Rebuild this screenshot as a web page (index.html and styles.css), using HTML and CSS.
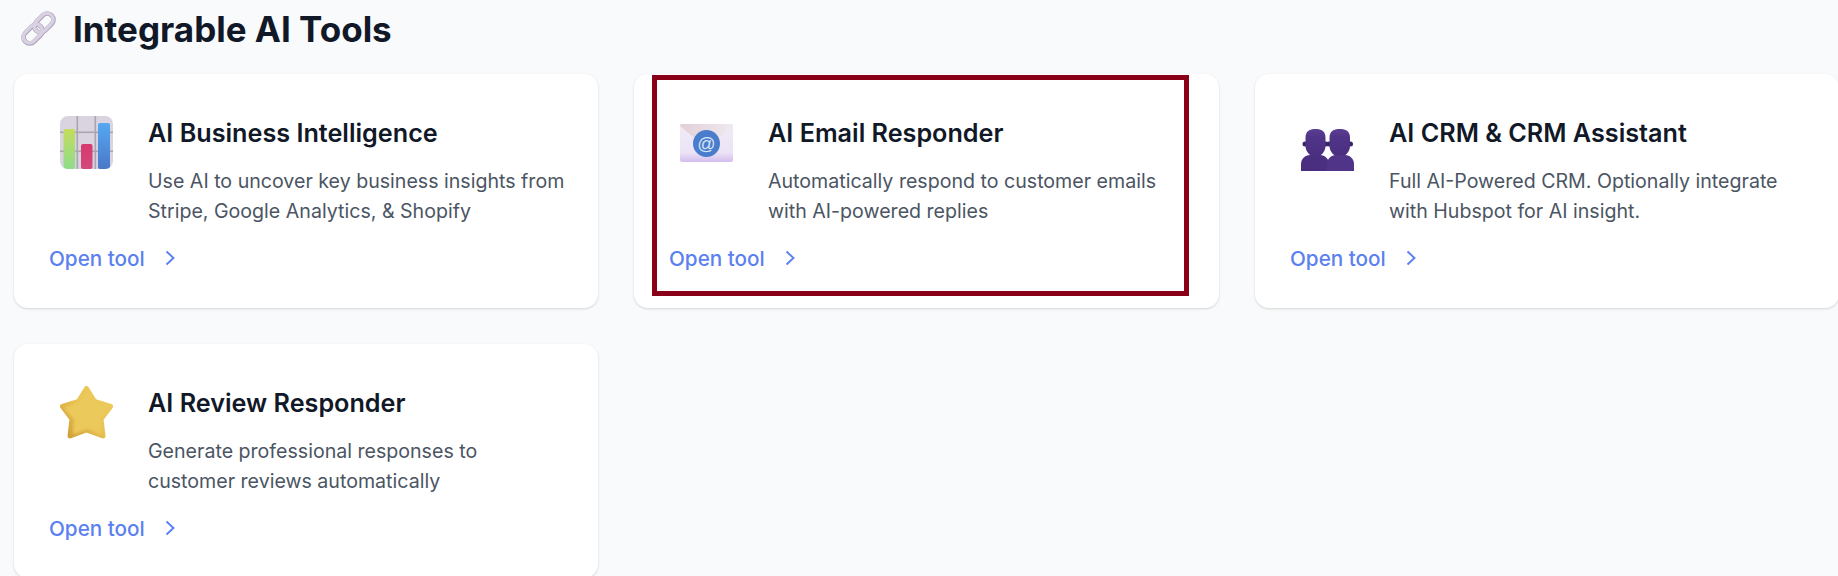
FILE: index.html
```html
<!DOCTYPE html>
<html lang="en">
<head>
  <meta charset="UTF-8" />
  <title>Integrable AI Tools</title>
  <link rel="stylesheet" href="styles.css">
</head>
<body>

  <!-- Page heading -->
  <header class="section-head">
    <svg class="head-icon" viewBox="0 0 36 36" aria-hidden="true">
      <g fill="none" transform="rotate(-45 18 18)">
        <rect x="0" y="12" width="21" height="12" rx="6" stroke="#a99db8" stroke-width="4.600"/>
        <rect x="15" y="12" width="21" height="12" rx="6" stroke="#a99db8" stroke-width="4.600"/>
        <rect x="0" y="11.600" width="21" height="12" rx="6" stroke="#d8d1e1" stroke-width="3.400"/>
        <rect x="15" y="11.600" width="21" height="12" rx="6" stroke="#d8d1e1" stroke-width="3.400"/>
      </g>
    </svg>
    <h1>Integrable AI Tools</h1>
  </header>

  <main class="tool-grid">

    <article class="tool-card">
      <div class="tool-top">
        <svg class="tool-icon" viewBox="0 0 53 53" aria-hidden="true">
          <defs>
            <linearGradient id="barGreen" x1="0" y1="0" x2="0" y2="1">
              <stop offset="0" stop-color="#c3dc5c"/>
              <stop offset="1" stop-color="#8fdc8a"/>
            </linearGradient>
            <linearGradient id="barPink" x1="0" y1="0" x2="0" y2="1">
              <stop offset="0" stop-color="#d8386f"/>
              <stop offset="1" stop-color="#d24a7c"/>
            </linearGradient>
            <linearGradient id="barBlue" x1="0" y1="0" x2="0" y2="1">
              <stop offset="0" stop-color="#55a8f2"/>
              <stop offset="1" stop-color="#4a78c8"/>
            </linearGradient>
            <clipPath id="boardClip"><rect width="53" height="53" rx="8"/></clipPath>
          </defs>
          <rect width="53" height="53" rx="8" fill="#d9d4e0"/>
          <g clip-path="url(#boardClip)">
            <g fill="#aaa5b0">
              <rect x="16.500" width="1.600" height="53"/>
              <rect x="34.500" width="1.600" height="53"/>
              <rect y="15.500" width="53" height="1.600"/>
              <rect y="34.500" width="53" height="1.600"/>
            </g>
            <rect x="3.500" y="13" width="11.500" height="40" rx="2" fill="url(#barGreen)"/>
            <rect x="21" y="28" width="11.500" height="25" rx="2" fill="url(#barPink)"/>
            <rect x="38" y="7" width="12" height="46" rx="2" fill="url(#barBlue)"/>
          </g>
        </svg>
        <div class="tool-text">
          <h2>AI Business Intelligence</h2>
          <p>Use AI to uncover key business insights from Stripe, Google Analytics, &amp; Shopify</p>
        </div>
      </div>
      <a class="tool-link" href="#">Open tool
        <svg viewBox="0 0 10 16" aria-hidden="true"><path d="M1.500 1.500 8.500 8l-7 6.500"/></svg>
      </a>
    </article>

    <article class="tool-card">
      <div class="tool-top">
        <svg class="tool-icon icon-mail" viewBox="0 0 53 38" aria-hidden="true">
          <defs>
            <linearGradient id="mailFlap" x1="0" y1="0" x2="1" y2="0">
              <stop offset="0" stop-color="#e3cfd8"/>
              <stop offset="1" stop-color="#efe9ee"/>
            </linearGradient>
            <linearGradient id="mailLow" x1="0" y1="0" x2="0" y2="1">
              <stop offset="0" stop-color="#f0ebf7"/>
              <stop offset="0.75" stop-color="#ece3f6"/>
              <stop offset="1" stop-color="#d3bdee"/>
            </linearGradient>
          </defs>
          <rect width="53" height="38" rx="2" fill="url(#mailLow)"/>
          <path d="M0 2a2 2 0 0 1 2-2h49a2 2 0 0 1 2 2L26.500 24z" fill="url(#mailFlap)"/>
          <circle cx="26.500" cy="19.500" r="13.500" fill="#4a7ccc"/>
          <text class="mail-at" x="26.500" y="26" text-anchor="middle">@</text>
        </svg>
        <div class="tool-text">
          <h2>AI Email Responder</h2>
          <p>Automatically respond to customer emails with AI-powered replies</p>
        </div>
      </div>
      <a class="tool-link" href="#">Open tool
        <svg viewBox="0 0 10 16" aria-hidden="true"><path d="M1.500 1.500 8.500 8l-7 6.500"/></svg>
      </a>
      <!-- Red highlight frame around the card content -->
      <div class="highlight-frame"></div>
    </article>

    <article class="tool-card">
      <div class="tool-top">
        <svg class="tool-icon icon-people" viewBox="0 0 53 42" aria-hidden="true">
          <defs>
            <linearGradient id="bust" x1="0" y1="0" x2="0" y2="1">
              <stop offset="0" stop-color="#5a3f92"/>
              <stop offset="0.3" stop-color="#4f3488"/>
              <stop offset="1" stop-color="#4a2f80"/>
            </linearGradient>
          </defs>
          <circle cx="4" cy="15" r="2.500" fill="#3a2468"/>
          <circle cx="25" cy="15" r="2.500" fill="#3a2468"/>
          <circle cx="28" cy="15" r="2.500" fill="#3a2468"/>
          <circle cx="49.500" cy="15" r="2.500" fill="#3a2468"/>
          <g fill="url(#bust)">
            <path d="M4.500 9C4.500 2 8.500 0 14.500 0s10 2 10 9v8c0 6-5 11-10 11S4.500 23 4.500 17z"/>
            <path d="M28.500 9c0-7 4-9 10.250-9S49 2 49 9v8c0 6-5 11-10.250 11S28.500 23 28.500 17z"/>
          </g>
          <path d="M0 42V35c0-5 4-9 9-9h10c5 0 9 4 9 9v7z" fill="#4a2f80"/>
          <path d="M26 42V35c0-5 4-9 9-9h9c5 0 9 4 9 9v7z" fill="#4f3488"/>
        </svg>
        <div class="tool-text">
          <h2>AI CRM &amp; CRM Assistant</h2>
          <p>Full AI-Powered CRM. Optionally integrate with Hubspot for AI insight.</p>
        </div>
      </div>
      <a class="tool-link" href="#">Open tool
        <svg viewBox="0 0 10 16" aria-hidden="true"><path d="M1.500 1.500 8.500 8l-7 6.500"/></svg>
      </a>
    </article>

    <article class="tool-card">
      <div class="tool-top">
        <svg class="tool-icon" viewBox="0 0 53 53" aria-hidden="true">
          <defs>
            <linearGradient id="starEdge" x1="1" y1="0" x2="0" y2="1">
              <stop offset="0" stop-color="#eecd5e"/>
              <stop offset="0.5" stop-color="#e8c252"/>
              <stop offset="1" stop-color="#cf9c34"/>
            </linearGradient>
            <filter id="starSoft"><feGaussianBlur stdDeviation="1.800"/></filter>
          </defs>
          <polygon class="star-base" points="26.500,2.500 34.500,15.500 50.500,20.500 41,33 43,50 26.500,44 10,50 12,33 2.500,20.500 18.500,15.500"/>
          <polygon class="star-top" points="27.500,7 34,18 47.500,22 38.500,32.500 40,46 27,40.500 15,46 16,32.500 7,22.500 20,18" filter="url(#starSoft)"/>
        </svg>
        <div class="tool-text">
          <h2>AI Review Responder</h2>
          <p>Generate professional responses to customer reviews automatically</p>
        </div>
      </div>
      <a class="tool-link" href="#">Open tool
        <svg viewBox="0 0 10 16" aria-hidden="true"><path d="M1.500 1.500 8.500 8l-7 6.500"/></svg>
      </a>
    </article>

  </main>
</body>
</html>
```

FILE: styles.css
```css
* {
  margin: 0;
  padding: 0;
  box-sizing: border-box;
}

body {
  height: 576px;
  overflow: hidden;
  background-color: #f9fafb;
  font-family: Inter, "Noto Sans", sans-serif;
  color: #111827;
}

/* Heading row */
.section-head {
  display: flex;
  align-items: center;
  gap: 16px;
  height: 74px;
  padding: 0 0 17px 20px;
}

.head-icon {
  width: 37px;
  height: 37px;
  flex-shrink: 0;
}

.section-head h1 {
  font-size: 35px;
  line-height: 40px;
  font-weight: 700;
}

/* Cards */
.tool-grid {
  display: grid;
  grid-template-columns: 584px 585px 584px;
  gap: 36px;
  padding-left: 14px;
}

.tool-card {
  position: relative;
  height: 234px;
  padding: 42px 31px 35px 35px;
  background-color: #fff;
  border-radius: 14px;
  box-shadow: 0 1px 3px rgba(0, 0, 0, 0.1), 0 1px 2px rgba(0, 0, 0, 0.06);
}

.tool-top {
  display: flex;
  align-items: flex-start;
}

.tool-icon {
  flex-shrink: 0;
  width: 53px;
  height: 53px;
  margin: 0 35px 0 11px;
}

.icon-mail {
  height: 38px;
  margin-top: 8px;
}

.icon-people {
  height: 42px;
  margin-top: 13px;
}

.mail-at {
  font-family: "Liberation Sans", sans-serif;
  font-size: 18px;
  fill: #d5e2f6;
}

.star-base {
  fill: url(#starEdge);
  stroke: url(#starEdge);
  stroke-width: 5;
  stroke-linejoin: round;
}

.star-top {
  fill: #ebc95a;
  stroke: #ebc95a;
  stroke-width: 4;
  stroke-linejoin: round;
}

.tool-text h2 {
  font-size: 25.2px;
  line-height: 32px;
  font-weight: 600;
  padding-top: 1px;
  margin-bottom: 17px;
}

.tool-text p {
  font-size: 19.6px;
  line-height: 30px;
  color: #4b5563;
}

.tool-link {
  display: flex;
  align-items: center;
  gap: 20px;
  margin-top: 18px;
  font-size: 20.7px;
  line-height: 30px;
  font-weight: 500;
  color: #5b80f0;
  text-decoration: none;
}

.tool-link svg {
  width: 10px;
  height: 16px;
  margin-top: -3px;
  fill: none;
  stroke: #5b80f0;
  stroke-width: 1.900;
}

/* Annotation drawn over the second card */
.highlight-frame {
  position: absolute;
  top: 1px;
  left: 18px;
  width: 537px;
  height: 221px;
  border: 5px solid #8a0019;
}
```
